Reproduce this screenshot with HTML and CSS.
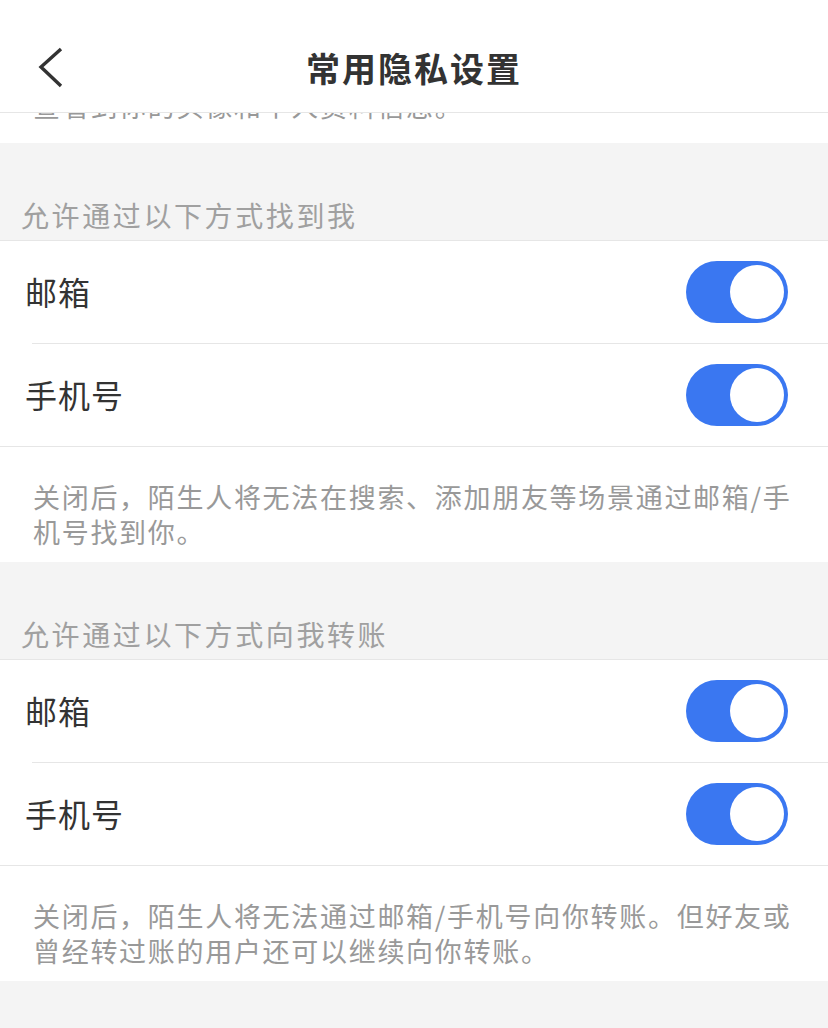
FILE: index.html
```html
<!DOCTYPE html>
<html lang="zh-CN">
<head>
    <meta charset="UTF-8">
    <meta name="viewport" content="width=device-width, initial-scale=1.0">
    <title>常用隐私设置</title>
    <link rel="stylesheet" href="styles.css">
</head>
<body>
    <header class="topbar">
        <div class="back">
            <svg width="28" height="44" viewBox="0 0 28 44">
                <polyline points="23,4 3,22 23,41" fill="none" stroke="#333" stroke-width="3.4"/>
            </svg>
        </div>
        <h1 class="title">常用隐私设置</h1>
        <div></div>
    </header>

    <main class="page">
        <p class="note first">查看到你的头像和个人资料信息。</p>

        <div class="section-title">允许通过以下方式找到我</div>
        <div class="group">
            <div class="row">
                <span class="label">邮箱</span>
                <span class="switch on"></span>
            </div>
            <div class="divider"></div>
            <div class="row">
                <span class="label">手机号</span>
                <span class="switch on"></span>
            </div>
        </div>
        <p class="note">关闭后，陌生人将无法在搜索、添加朋友等场景通过邮箱/手机号找到你。</p>

        <div class="section-title">允许通过以下方式向我转账</div>
        <div class="group">
            <div class="row">
                <span class="label">邮箱</span>
                <span class="switch on"></span>
            </div>
            <div class="divider"></div>
            <div class="row">
                <span class="label">手机号</span>
                <span class="switch on"></span>
            </div>
        </div>
        <p class="note">关闭后，陌生人将无法通过邮箱/手机号向你转账。但好友或曾经转过账的用户还可以继续向你转账。</p>
    </main>
</body>
</html>
```

FILE: styles.css
```css
body {
    margin: 0;
    background-color: #f4f4f4;
    font-family: "Noto Sans CJK SC", "Noto Sans", sans-serif;
    color: #333;
}
.topbar {
    position: fixed;
    top: 0;
    left: 0;
    right: 0;
    height: 90px;
    padding-top: 22px;
    background-color: white;
    border-bottom: 1px solid #e6e6e6;
    display: grid;
    grid-template-columns: 1fr auto 1fr;
    align-items: center;
    z-index: 2;
}
.back {
    padding-left: 38px;
    display: flex;
    align-items: center;
}
.back svg {
    display: block;
}
.title {
    margin: 0;
    font-size: 34px;
    font-weight: 700;
    letter-spacing: 2px;
    color: #333;
}
.page {
    margin: 0;
}
.note {
    margin: 0;
    padding: 32px 33px 13px;
    background-color: white;
    font-size: 27px;
    line-height: 35px;
    letter-spacing: 1.7px;
    color: #999;
}
.note.first {
    padding-top: 88px;
    padding-bottom: 20px;
}
.section-title {
    padding: 55px 21px 7px;
    font-size: 28px;
    line-height: 35px;
    letter-spacing: 2.6px;
    color: #a0a0a0;
}
.group {
    background-color: white;
    border-top: 1px solid #e6e6e6;
    border-bottom: 1px solid #e6e6e6;
}
.row {
    height: 102px;
    padding: 0 40px 0 25px;
    display: flex;
    align-items: center;
    justify-content: space-between;
}
.label {
    font-size: 32px;
    letter-spacing: 1px;
    color: #333;
    margin-top: -3px;
}
.divider {
    height: 1px;
    margin-left: 32px;
    background-color: #e6e6e6;
}
.switch {
    position: relative;
    width: 102px;
    height: 62px;
    border-radius: 31px;
    background-color: #e5e5e5;
}
.switch::after {
    content: "";
    position: absolute;
    top: 4px;
    left: 4px;
    width: 54px;
    height: 54px;
    border-radius: 50%;
    background-color: white;
}
.switch.on {
    background-color: #3a77f1;
}
.switch.on::after {
    left: auto;
    right: 4px;
}
```
